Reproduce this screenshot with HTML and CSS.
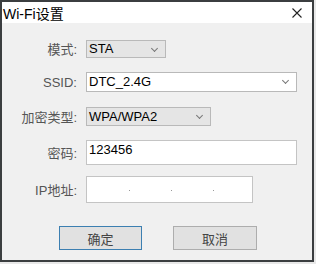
FILE: index.html
```html
<!DOCTYPE html>
<html lang="zh-CN">
<head>
    <meta charset="UTF-8">
    <title>Wi-Fi设置</title>
    <link rel="stylesheet" href="styles.css">
</head>
<body>
    <div class="window">
        <div class="title-bar">
            <span class="title">Wi-Fi设置</span>
            <svg class="close" width="10" height="10" viewBox="0 0 10 10">
                <path d="M0.5 0.5 L9.5 9.5 M9.5 0.5 L0.5 9.5" stroke="#222" stroke-width="1.1" fill="none"/>
            </svg>
        </div>
        <div class="content">
            <div class="row row-mode">
                <label class="label">模式:</label>
                <div class="combo combo-mode">STA<span class="arrow"></span></div>
            </div>
            <div class="row row-ssid">
                <label class="label">SSID:</label>
                <div class="combo combo-edit combo-ssid">DTC_2.4G<span class="arrow"></span></div>
            </div>
            <div class="row row-enc">
                <label class="label">加密类型:</label>
                <div class="combo combo-enc">WPA/WPA2<span class="arrow"></span></div>
            </div>
            <div class="row row-pwd">
                <label class="label">密码:</label>
                <div class="edit edit-pwd">123456</div>
            </div>
            <div class="row row-ip">
                <label class="label">IP地址:</label>
                <div class="edit edit-ip">
                    <span class="dot"></span><span class="dot"></span><span class="dot"></span>
                </div>
            </div>
            <div class="buttons">
                <button class="button button-default">确定</button>
                <button class="button">取消</button>
            </div>
        </div>
    </div>
</body>
</html>
```

FILE: styles.css
```css
body {
    margin: 0;
    background-color: #e8e8e8;
    font-family: "Liberation Sans", "Noto Sans CJK SC", sans-serif;
}

.window {
    width: 314px;
    height: 262px;
    box-sizing: border-box;
    border: 2px solid #3b3e40;
    background-color: #f0f0f0;
    display: flex;
    flex-direction: column;
}

.title-bar {
    height: 21px;
    background-color: #fff;
    display: flex;
    align-items: center;
    justify-content: space-between;
    padding: 0 10px 0 1px;
}

.title {
    font-size: 14px;
    color: #000;
}

.close {
    display: block;
    margin-top: 1px;
}

.content {
    position: relative;
}

.row {
    display: flex;
    align-items: center;
}

.label {
    width: 75px;
    text-align: right;
    margin-right: 9px;
    font-size: 13px;
    color: #555;
}

.row-mode { margin-top: 16px; }
.row-ssid { margin-top: 14px; }
.row-enc { margin-top: 15px; }
.row-pwd { margin-top: 14px; }
.row-ip { margin-top: 11px; }

.combo {
    position: relative;
    box-sizing: border-box;
    height: 19px;
    border: 1px solid #b9b9b9;
    background-color: #e5e5e5;
    font-size: 13px;
    line-height: 17px;
    padding-left: 2px;
    color: #000;
}

.combo-edit {
    background-color: #fff;
    height: 20px;
    line-height: 17px;
}

.combo-mode { width: 80px; height: 18px; line-height: 16px; }
.combo-ssid { width: 211px; }
.combo-enc { width: 125px; }

.arrow {
    position: absolute;
    right: 8px;
    top: 5px;
    width: 4px;
    height: 4px;
    border-right: 1px solid #777;
    border-bottom: 1px solid #777;
    transform: rotate(45deg);
}

.edit {
    box-sizing: border-box;
    border: 1px solid #c4c4c4;
    background-color: #fff;
    font-size: 13px;
    color: #000;
}

.edit-pwd {
    width: 211px;
    height: 25px;
    padding-left: 2px;
    line-height: 17px;
}

.edit-ip {
    width: 167px;
    height: 27px;
    display: flex;
    align-items: center;
    padding-left: 42px;
    gap: 41px;
}

.dot {
    width: 1px;
    height: 1px;
    background-color: #999;
    margin-top: 1px;
}

.buttons {
    display: flex;
    margin-top: 23px;
    margin-left: 57px;
    gap: 31px;
}

.button {
    width: 84px;
    height: 24px;
    box-sizing: border-box;
    border: 1px solid #adadad;
    background-color: #e1e1e1;
    font-family: "Noto Sans CJK SC", sans-serif;
    font-size: 13px;
    color: #444;
    padding: 0;
}

.button-default {
    width: 83px;
    border-color: #3c7fb1;
}
```
